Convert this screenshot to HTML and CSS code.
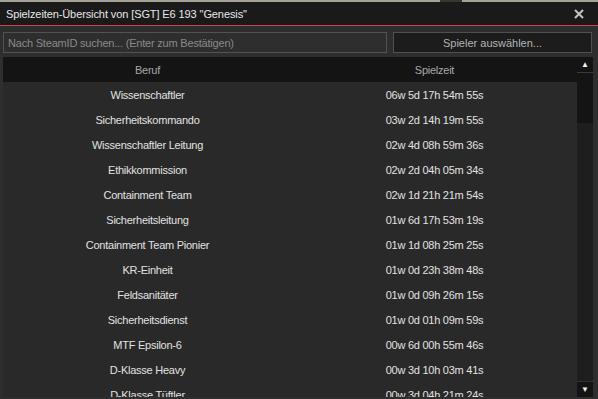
FILE: index.html
```html
<!DOCTYPE html>
<html lang="de">
<head>
    <meta charset="UTF-8">
    <title>Spielzeiten-Übersicht</title>
    <link rel="stylesheet" href="styles.css">
</head>
<body>
    <div class="backdrop"><span class="backdrop-dark"></span></div>

    <div class="window">
        <div class="titlebar">
            <span class="title">Spielzeiten-Übersicht von [SGT] E6 193 "Genesis"</span>
            <svg class="close" width="10" height="10" viewBox="0 0 10 10">
                <path d="M1 1 L9 9 M9 1 L1 9" stroke="#c4c4c4" stroke-width="2" fill="none"/>
            </svg>
        </div>

        <div class="toolbar">
            <input type="text" class="search" placeholder="Nach SteamID suchen... (Enter zum Bestätigen)">
            <button class="pick">Spieler auswählen...</button>
        </div>

        <div class="list">
            <div class="table">
                <div class="row head">
                    <span>Beruf</span>
                    <span>Spielzeit</span>
                </div>
                <div class="row"><span>Wissenschaftler</span><span>06w 5d 17h 54m 55s</span></div>
                <div class="row"><span>Sicherheitskommando</span><span>03w 2d 14h 19m 55s</span></div>
                <div class="row"><span>Wissenschaftler Leitung</span><span>02w 4d 08h 59m 36s</span></div>
                <div class="row"><span>Ethikkommission</span><span>02w 2d 04h 05m 34s</span></div>
                <div class="row"><span>Containment Team</span><span>02w 1d 21h 21m 54s</span></div>
                <div class="row"><span>Sicherheitsleitung</span><span>01w 6d 17h 53m 19s</span></div>
                <div class="row"><span>Containment Team Pionier</span><span>01w 1d 08h 25m 25s</span></div>
                <div class="row"><span>KR-Einheit</span><span>01w 0d 23h 38m 48s</span></div>
                <div class="row"><span>Feldsanitäter</span><span>01w 0d 09h 26m 15s</span></div>
                <div class="row"><span>Sicherheitsdienst</span><span>01w 0d 01h 09m 59s</span></div>
                <div class="row"><span>MTF Epsilon-6</span><span>00w 6d 00h 55m 46s</span></div>
                <div class="row"><span>D-Klasse Heavy</span><span>00w 3d 10h 03m 41s</span></div>
                <div class="row"><span>D-Klasse Tüftler</span><span>00w 3d 04h 21m 24s</span></div>
            </div>
            <div class="scrollbar">
                <div class="scroll-btn">&#9650;</div>
                <div class="scroll-thumb"></div>
                <div class="scroll-track"></div>
                <div class="scroll-btn">&#9660;</div>
            </div>
        </div>
    </div>
</body>
</html>
```

FILE: styles.css
```css
body, html {
    margin: 0;
    padding: 0;
    width: 598px;
    height: 399px;
    overflow: hidden;
    background-color: #2e2e2e;
    font-family: "Liberation Sans", Arial, sans-serif;
    font-size: 11px;
}

.backdrop {
    height: 2px;
    background-color: #a6a196;
    position: relative;
}

.backdrop-dark {
    position: absolute;
    left: 440px;
    top: 0;
    width: 22px;
    height: 2px;
    background-color: #3a3531;
}

.window {
    height: 397px;
    display: flex;
    flex-direction: column;
    background-color: #2e2e2e;
}

.titlebar {
    height: 24px;
    box-sizing: border-box;
    background-color: #1a1a1a;
    border-bottom: 1px solid #c9474c;
    display: flex;
    align-items: center;
    justify-content: space-between;
    padding: 0 14px 0 6px;
}

.title {
    color: #e8e8e8;
    font-size: 11px;
    letter-spacing: -0.1px;
    padding-top: 1px;
}

.close {
    display: block;
}

.toolbar {
    display: flex;
    gap: 6px;
    padding: 6px 6px 4px 3px;
}

.search {
    width: 384px;
    height: 21px;
    box-sizing: border-box;
    margin: 0;
    padding: 0 4px;
    background-color: #2e2e2e;
    border: 1px solid #525252;
    color: #ddd;
    font-family: inherit;
    font-size: 11px;
    letter-spacing: -0.2px;
    outline: none;
}

.search::placeholder {
    color: #8a8a8a;
}

.pick {
    flex: 1;
    height: 21px;
    margin: 0;
    padding: 0;
    background-color: #1c1c1c;
    border: 1px solid #505050;
    color: #b4b4b4;
    font-family: inherit;
    font-size: 11px;
}

.list {
    flex: 1;
    min-height: 0;
    display: flex;
    margin: 0 5px 2px 3px;
    overflow: hidden;
}

.table {
    flex: 1;
    background-color: #292929;
    overflow: hidden;
}

.row {
    display: flex;
    height: 25px;
    align-items: center;
    color: #e2e2e2;
    font-size: 11px;
    letter-spacing: -0.25px;
}

.row span {
    flex: 1;
    text-align: center;
}

.row span:first-child {
    flex: 0 0 289px;
}

.row.head {
    background-color: #141414;
    color: #a8a8a8;
}

.scrollbar {
    width: 16px;
    display: flex;
    flex-direction: column;
    background-color: #141414;
}

.scroll-btn {
    height: 15px;
    background-color: #141414;
    color: #f2f2f2;
    font-size: 8px;
    line-height: 15px;
    text-align: center;
}

.scroll-thumb {
    height: 50px;
    border-top: 1px solid #3a3a3a;
    background-color: #141414;
}

.scroll-track {
    flex: 1;
    background-color: #1e1e1e;
    border-bottom: 1px solid #333;
}
```
